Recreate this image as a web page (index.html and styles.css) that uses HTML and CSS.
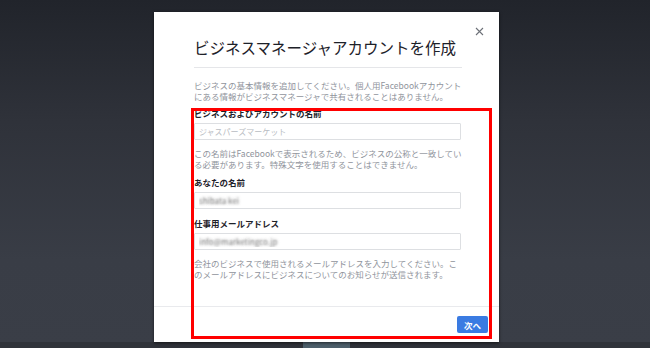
FILE: index.html
```html
<!DOCTYPE html>
<html lang="ja">

<head>
    <meta charset="UTF-8">
    <meta name="viewport" content="width=device-width, initial-scale=1.0">
    <title>ビジネスマネージャアカウントを作成</title>
    <link rel="stylesheet" href="styles.css">
</head>

<body>

    <div class="screen">

        <div class="modal">
            <button class="close" aria-label="閉じる">
                <svg width="9" height="9" viewBox="0 0 9 9">
                    <path d="M1 1L8 8M8 1L1 8" stroke="#6d7178" stroke-width="1.1" fill="none" />
                </svg>
            </button>

            <div class="content">
                <h1 class="title">ビジネスマネージャアカウントを作成</h1>

                <p class="intro">ビジネスの基本情報を追加してください。個人用Facebookアカウントにある情報がビジネスマネージャで共有されることはありません。</p>

                <div class="field">
                    <label class="label" for="bizName">ビジネスおよびアカウントの名前</label>
                    <input class="input" id="bizName" type="text" placeholder="ジャスパーズマーケット">
                </div>
                <p class="hint">この名前はFacebookで表示されるため、ビジネスの公称と一致している必要があります。特殊文字を使用することはできません。</p>

                <div class="field">
                    <label class="label" for="yourName">あなたの名前</label>
                    <input class="input blurred" id="yourName" type="text" value="shibata kei">
                </div>

                <div class="field">
                    <label class="label" for="workMail">仕事用メールアドレス</label>
                    <input class="input blurred" id="workMail" type="text" value="info@marketingco.jp">
                </div>
                <p class="hint">会社のビジネスで使用されるメールアドレスを入力してください。このメールアドレスにビジネスについてのお知らせが送信されます。</p>
            </div>

            <div class="footer">
                <button class="next">次へ</button>
            </div>
        </div>

        <!-- annotation frame drawn over the form -->
        <div class="highlight"></div>

        <div class="taskbar">
            <span class="tab"></span>
        </div>

    </div>

</body>

</html>
```

FILE: styles.css
```css
*,
*::after,
*::before {
    margin: 0;
    padding: 0;
    box-sizing: border-box;
}

body {
    width: 650px;
    height: 348px;
    overflow: hidden;
    font-family: "Noto Sans CJK JP", "Noto Sans", sans-serif;
    color: #1d2129;
}

.screen {
    position: relative;
    width: 650px;
    height: 348px;
    padding-top: 12px;
    background: linear-gradient(#21242b 0%, #2f323a 35%, #393d46 75%, #3a3e47 100%);
    display: flex;
    flex-direction: column;
}

.modal {
    position: relative;
    margin-left: 154px;
    width: 345px;
    height: 330px;
    background: #fff;
    box-shadow: 0 1px 3px rgba(0, 0, 0, 0.6);
    display: flex;
    flex-direction: column;
}

.close {
    position: absolute;
    top: 14px;
    right: 14px;
    width: 11px;
    height: 11px;
    border: none;
    background: none;
    display: flex;
    justify-content: center;
    align-items: center;
}

.content {
    flex: 1;
    padding: 25px 0 0 40px;
    width: 310px;
}

.title {
    font-size: 15.5px;
    font-weight: 400;
    line-height: 20px;
    color: #1d2129;
    padding-bottom: 10px;
    border-bottom: 1px solid #e5e6e9;
    width: 268px;
    white-space: nowrap;
}

.intro,
.hint {
    font-size: 8.5px;
    line-height: 10.6px;
    color: #90949c;
    width: 270px;
}

.intro {
    margin-top: 12px;
}

.hint {
    margin-top: 8px;
}

.field {
    margin-top: 7px;
    display: flex;
    flex-direction: column;
    gap: 4px;
}

.hint + .field {
    margin-top: 8px;
}

.field + .field {
    margin-top: 9px;
}

.label {
    font-size: 8.5px;
    line-height: 11px;
    font-weight: 700;
    color: #1d2129;
}

.input {
    width: 267px;
    height: 17px;
    border: 1px solid #dddfe2;
    border-radius: 1px;
    padding: 0 4px;
    font-family: inherit;
    font-size: 8px;
    color: #1d2129;
    outline: none;
}

.input::placeholder {
    color: #b8bcc2;
}

.blurred {
    color: transparent;
    text-shadow: 0 0 2.5px rgba(70, 70, 70, 0.8);
}

.footer {
    height: 36px;
    border-top: 1px solid #e9eaed;
    display: flex;
    justify-content: flex-end;
    align-items: flex-start;
    padding: 9px 11px 0 0;
}

.next {
    width: 31px;
    height: 17px;
    border: none;
    border-radius: 2px;
    background: #3a7be2;
    color: #fff;
    font-family: inherit;
    font-size: 8.5px;
    font-weight: 700;
}

.highlight {
    position: absolute;
    left: 191px;
    top: 108px;
    width: 301px;
    height: 231px;
    border: 3px solid #ff0000;
}

.taskbar {
    height: 6px;
    background: #30333a;
    display: flex;
}

.tab {
    margin-left: 303px;
    width: 47px;
    background: #4d5f6b;
}
```
